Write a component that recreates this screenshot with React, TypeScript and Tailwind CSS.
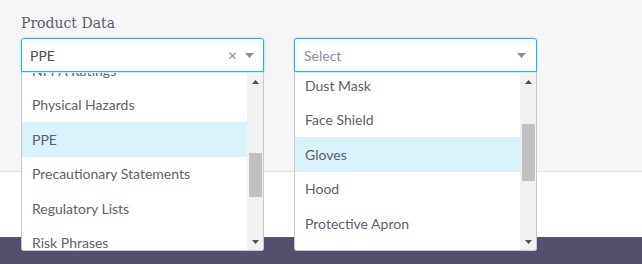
import React from "react";

const LEFT_ITEMS = [
  "NFPA Ratings",
  "Physical Hazards",
  "PPE",
  "Precautionary Statements",
  "Regulatory Lists",
  "Risk Phrases",
];

const RIGHT_ITEMS = ["Dust Mask", "Face Shield", "Gloves", "Hood", "Protective Apron"];

function Caret({ className }: { className?: string }) {
  return (
    <svg width="9" height="5" viewBox="0 0 9 5" className={className}>
      <path d="M0 0h9L4.5 5z" fill="currentColor" />
    </svg>
  );
}

function ScrollBar({ thumbTop, thumbHeight }: { thumbTop: string; thumbHeight: string }) {
  return (
    <div className="flex w-[16px] flex-col items-center bg-[#f1f1f1]">
      <div className="flex h-[17px] items-center justify-center pt-[1px]">
        <svg width="7" height="4" viewBox="0 0 7 4">
          <path d="M0 4h7L3.5 0z" fill="#505050" />
        </svg>
      </div>
      <div className="flex-1 w-full">
        <div className={`mx-auto w-[13px] bg-[#c1c1c1] ${thumbTop} ${thumbHeight}`} />
      </div>
      <div className="flex h-[17px] items-center justify-center">
        <svg width="7" height="4" viewBox="0 0 7 4">
          <path d="M0 0h7L3.5 4z" fill="#505050" />
        </svg>
      </div>
    </div>
  );
}

function Menu({
  items,
  active,
  offset,
  thumbTop,
  thumbHeight,
}: {
  items: string[];
  active: string;
  offset: string;
  thumbTop: string;
  thumbHeight: string;
}) {
  return (
    <div className="absolute left-0 top-full z-10 flex h-[179px] w-full overflow-hidden rounded-b-[3px] border border-t-[#e4e4e4] border-[#c9c9c9] bg-white">
      <div className="flex-1 overflow-hidden">
        <div className={offset}>
          {items.map((item) => (
            <div
              key={item}
              className={`flex h-[34.5px] items-center pl-[10px] text-[14px] text-[#60606c] ${
                item === active ? "bg-[#d9f1f9]" : ""
              }`}
            >
              {item}
            </div>
          ))}
        </div>
      </div>
      <ScrollBar thumbTop={thumbTop} thumbHeight={thumbHeight} />
    </div>
  );
}

export default function App() {
  return (
    <div className="flex h-[264px] w-[642px] flex-col font-['Lato',sans-serif]">
      <div className="h-[172px] border-b border-[#e2e2e2] bg-[#f6f6f6] px-[21px] pt-[13px]">
        <div className="mb-[4px] font-['DejaVu_Serif',serif] text-[14px] text-[#5a5a6c]">Product Data</div>
        <div className="flex gap-[30px]">
          <div className="relative w-[243px]">
            <div className="flex h-[34px] items-center rounded-t-[3px] border border-[#1cb8e3] bg-white pl-[8px] pr-[9px] shadow-[0_0_3px_rgba(0,0,0,0.18)]">
              <span className="flex-1 text-[14px] text-[#4a4a58]">PPE</span>
              <span className="mr-[8px] text-[16px] leading-none text-[#8b8ba3]">×</span>
              <Caret className="text-[#8b8ba3]" />
            </div>
            <Menu items={LEFT_ITEMS} active="PPE" offset="-mt-[20px]" thumbTop="mt-[63px]" thumbHeight="h-[44px]" />
          </div>
          <div className="relative w-[243px]">
            <div className="flex h-[34px] items-center rounded-t-[3px] border border-[#1cb8e3] bg-white pl-[9px] pr-[10px] shadow-[0_0_3px_rgba(0,0,0,0.18)]">
              <span className="flex-1 text-[14px] text-[#8b8ba6]">Select</span>
              <Caret className="text-[#8b8ba3]" />
            </div>
            <Menu items={RIGHT_ITEMS} active="Gloves" offset="-mt-[5px]" thumbTop="mt-[34px]" thumbHeight="h-[57px]" />
          </div>
        </div>
      </div>
      <div className="h-[65px] bg-white" />
      <div className="flex-1 bg-[#52506e]" />
    </div>
  );
}
